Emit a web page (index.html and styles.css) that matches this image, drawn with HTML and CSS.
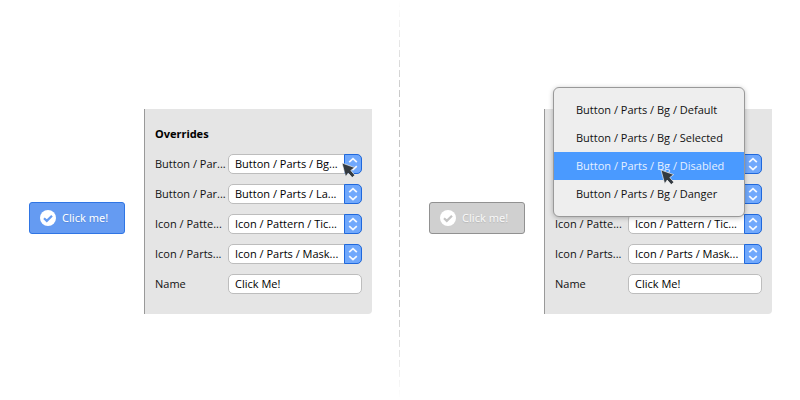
FILE: index.html
```
<!DOCTYPE html>
<html lang="en">
<head>
<meta charset="utf-8">
<title>Symbol overrides</title>
<link rel="stylesheet" href="styles.css">
</head>
<body>
<svg class="defs" width="0" height="0" aria-hidden="true">
  <symbol id="tick" viewBox="0 0 16 16"><circle cx="8" cy="8" r="8" fill="#fff"/><path d="M4 8.2 6.8 10.9 12 5.7" fill="none" stroke="currentColor" stroke-width="2.2"/></symbol>
  <symbol id="chevrons" viewBox="0 0 16 18"><path d="M4.2 7.2 8 3.6 11.8 7.2M4.2 11.1 8 14.7 11.8 11.1" fill="none" stroke="#fff" stroke-opacity=".92" stroke-width="1.7"/></symbol>
  <symbol id="cursor" viewBox="0 0 16 18"><path d="M1 1 13.6 5.6 9.8 8.5 13.9 13.2 11.2 15.6 7.2 11.1 4.7 14.9Z" fill="#333a40" stroke="#fff" stroke-opacity=".8" stroke-width=".8"/></symbol>
</svg>
<main class="stage">
  <section class="scene">
    <div class="button"><svg class="tick"><use href="#tick"/></svg><span>Click me!</span></div>
    <div class="panel">
      <h2 class="title">Overrides</h2>
      <div class="row"><span class="label">Button / Par...</span><div class="field">Button / Parts / Bg...<svg class="stepper"><use href="#chevrons"/></svg></div></div>
      <div class="row"><span class="label">Button / Par...</span><div class="field">Button / Parts / La...<svg class="stepper"><use href="#chevrons"/></svg></div></div>
      <div class="row"><span class="label">Icon / Patte...</span><div class="field">Icon / Pattern / Tic...<svg class="stepper"><use href="#chevrons"/></svg></div></div>
      <div class="row"><span class="label">Icon / Parts...</span><div class="field">Icon / Parts / Mask...<svg class="stepper"><use href="#chevrons"/></svg></div></div>
      <div class="row"><span class="label">Name</span><div class="field">Click Me!</div></div>
    </div>
    <svg class="cursor cursor-select"><use href="#cursor"/></svg>
  </section>
  <section class="scene">
    <div class="button disabled"><svg class="tick"><use href="#tick"/></svg><span>Click me!</span></div>
    <div class="panel">
      <h2 class="title"></h2>
      <div class="row"><span class="label"></span><div class="field"><svg class="stepper"><use href="#chevrons"/></svg></div></div>
      <div class="row"><span class="label"></span><div class="field"><svg class="stepper"><use href="#chevrons"/></svg></div></div>
      <div class="row"><span class="label">Icon / Patte...</span><div class="field">Icon / Pattern / Tic...<svg class="stepper"><use href="#chevrons"/></svg></div></div>
      <div class="row"><span class="label">Icon / Parts...</span><div class="field">Icon / Parts / Mask...<svg class="stepper"><use href="#chevrons"/></svg></div></div>
      <div class="row"><span class="label">Name</span><div class="field">Click Me!</div></div>
    </div>
    <div class="menu">
      <div class="item">Button / Parts / Bg / Default</div>
      <div class="item">Button / Parts / Bg / Selected</div>
      <div class="item active">Button / Parts / Bg / Disabled</div>
      <div class="item">Button / Parts / Bg / Danger</div>
    </div>
    <svg class="cursor cursor-menu"><use href="#cursor"/></svg>
  </section>
  <div class="divider"></div>
</main>
</body>
</html>
```
FILE: styles.css
```
* { box-sizing: border-box; }
body { margin: 0; background: #fff; font: 11px/20px "Open Sans", "Noto Sans", sans-serif; color: #111; }
.defs { position: absolute; }
.stage { position: relative; display: flex; width: 800px; height: 400px; overflow: hidden; }
.scene { position: relative; width: 400px; display: flex; align-items: flex-start; padding: 109px 28px 0 29px; gap: 19px; }
.button { width: 96px; height: 32px; margin-top: 93px; display: flex; align-items: center; gap: 6px; padding-left: 10px; border: 1px solid #2f75e4; border-radius: 3px; background: #659bf2; color: #659bf2; }
.button span { color: #fff; font-family: "Noto Sans", sans-serif; text-shadow: 0 1px 1px rgba(0,0,0,.12); }
.button.disabled { background: #d0d0d0; border-color: #919191; color: #c4c4c4; }
.button.disabled span { color: #f8f8f8; }
.tick { width: 16px; height: 16px; }
.panel { width: 228px; height: 205px; padding: 15px 10px 0; border-left: 1px solid #999; border-bottom-right-radius: 4px; background: #e5e5e5; }
.title { margin: 0 0 10px; height: 20px; font-family: "Noto Sans", sans-serif; font-size: 11px; line-height: 20px; font-weight: 700; color: #000; }
.row { display: flex; height: 20px; margin-bottom: 10px; white-space: nowrap; }
.label { width: 73px; flex: none; }
.field { position: relative; width: 134px; height: 20px; padding-left: 6px; line-height: 18px; border: 1px solid #bdbdbd; border-radius: 5px; background: #fff; color: #000; }
.stepper { position: absolute; top: -1px; right: -1px; width: 18px; height: 20px; border: 1px solid #1f68dc; border-radius: 0 5px 5px 0; background: #70a8fc; }
.divider { position: absolute; left: 399px; top: 0; width: 1px; height: 400px; background: repeating-linear-gradient(#c6c6c6 0 7px, transparent 7px 10px); mask-image: linear-gradient(transparent, #000 25%, #000 75%, transparent); }
.menu { position: absolute; left: 153px; top: 87px; width: 192px; height: 130px; padding: 8px 0; border: 1px solid #999; border-radius: 6px; background: #eee; box-shadow: 0 1px 5px rgba(0,0,0,.25); }
.item { height: 28px; padding-left: 22px; line-height: 28px; white-space: nowrap; }
.item.active { background: #4a9aff; color: #e6f0ff; }
.cursor { position: absolute; width: 16px; height: 18px; }
.cursor-select { left: 341px; top: 162px; }
.cursor-menu { left: 260px; top: 169px; }
```
